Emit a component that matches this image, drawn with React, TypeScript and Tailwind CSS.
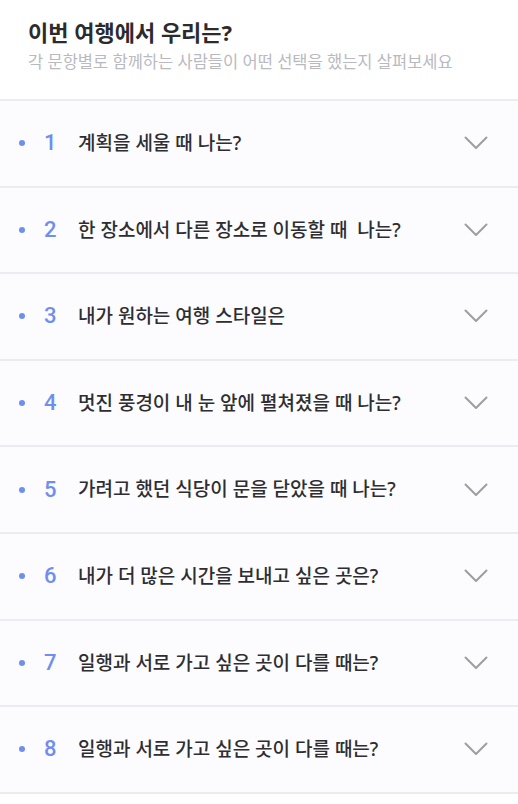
const QUESTIONS = [
  "계획을 세울 때 나는?",
  "한 장소에서 다른 장소로 이동할 때  나는?",
  "내가 원하는 여행 스타일은",
  "멋진 풍경이 내 눈 앞에 펼쳐졌을 때 나는?",
  "가려고 했던 식당이 문을 닫았을 때 나는?",
  "내가 더 많은 시간을 보내고 싶은 곳은?",
  "일행과 서로 가고 싶은 곳이 다를 때는?",
  "일행과 서로 가고 싶은 곳이 다를 때는?",
];

function Chevron() {
  return (
    <svg viewBox="0 0 24 14" className="h-[14px] w-[24px]" fill="none" aria-hidden>
      <path
        d="M1.5 1.5 L12 12 L22.5 1.5"
        stroke="#9d9da3"
        strokeWidth="2"
        strokeLinecap="round"
        strokeLinejoin="round"
      />
    </svg>
  );
}

export default function App() {
  return (
    <div
      className="min-h-screen bg-white"
      style={{ fontFamily: '"Noto Sans", "Noto Sans CJK KR", sans-serif' }}
    >
      {/* header */}
      <div className="h-[99px] px-[28px] pt-[17px]">
        <h1 className="text-[22px] font-bold leading-[30px] text-[#2b2b2e]">이번 여행에서 우리는?</h1>
        <p className="mt-[5px] whitespace-nowrap text-[16.5px] leading-[20px] text-[#b9b9c0]">
          각 문항별로 함께하는 사람들이 어떤 선택을 했는지 살펴보세요
        </p>
      </div>

      {/* questions */}
      <ul className="border-t-2 border-[#ececf0]">
        {QUESTIONS.map((q, i) => (
          <li
            key={i}
            className="flex h-[86.6px] items-center border-b-2 border-[#ececf0] bg-[#fcfcfe] pl-[19px] pr-[30px]"
          >
            <span className="h-[6px] w-[6px] shrink-0 rounded-full bg-[#6f8ef0]" />
            <span
              className="ml-[19px] w-[22px] shrink-0 text-[22px] font-medium leading-none text-[#6f8ef0]"
              style={{ fontFamily: "Roboto, sans-serif" }}
            >
              {i + 1}
            </span>
            <span className="ml-[12px] flex-1 whitespace-pre text-[19px] font-medium text-[#2e2e32]">{q}</span>
            <Chevron />
          </li>
        ))}
      </ul>
    </div>
  );
}
